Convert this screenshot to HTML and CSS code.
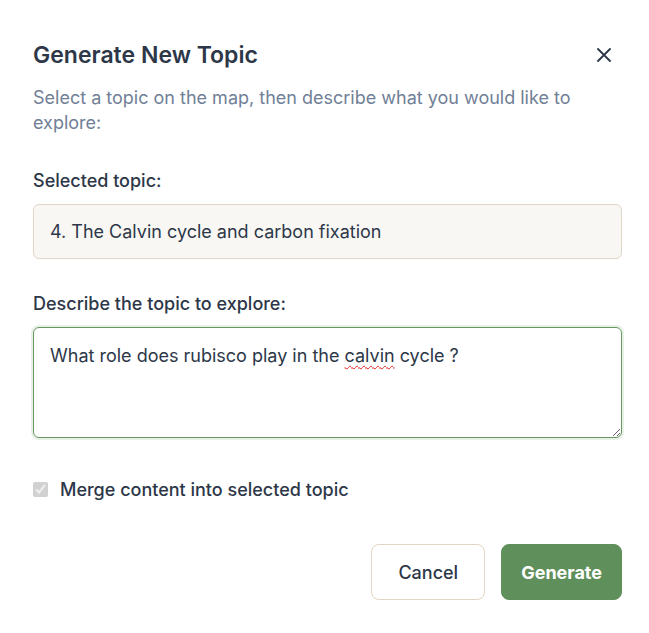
FILE: index.html
```html
<!DOCTYPE html>
<html lang="en">
<head>
<meta charset="utf-8">
<title>Generate New Topic</title>
<link rel="stylesheet" href="styles.css">
</head>
<body>
<div class="dialog">
  <div class="header">
    <h1 class="title">Generate New Topic</h1>
    <button class="close" aria-label="Close">
      <svg width="14" height="14" viewBox="0 0 14 14"><path d="M1 1L13 13M13 1L1 13" stroke="#2d3748" stroke-width="1.8" stroke-linecap="round" fill="none"/></svg>
    </button>
  </div>
  <p class="subtitle">Select a topic on the map, then describe what you would like to explore:</p>

  <div class="field">
    <label class="label">Selected topic:</label>
    <div class="input">4. The Calvin cycle and carbon fixation</div>
  </div>

  <div class="field">
    <label class="label">Describe the topic to explore:</label>
    <div class="textarea">What role does rubisco play in the <span class="misspelled">calvin</span> cycle ?</div>
  </div>

  <label class="check-row">
    <input type="checkbox" class="check" checked disabled>
    <span>Merge content into selected topic</span>
  </label>

  <div class="actions">
    <button class="btn btn-cancel">Cancel</button>
    <button class="btn btn-primary">Generate</button>
  </div>
</div>
</body>
</html>
```
FILE: styles.css
```css
* { box-sizing: border-box; }
html, body { margin: 0; background: #ffffff; }
body {
  font-family: Inter, "Noto Sans", sans-serif;
  color: #2d3748;
}
.dialog {
  padding: 41px 27px 0 33px;
}
.header {
  display: flex;
  justify-content: space-between;
  align-items: center;
}
.title {
  margin: 0;
  font-size: 23px;
  line-height: 28px;
  font-weight: 600;
  color: #2d3748;
}
.close {
  border: 0;
  background: none;
  padding: 0;
  margin-right: 11px;
  width: 14px;
  height: 14px;
  display: flex;
}
.subtitle {
  margin: 16px 0 0;
  font-size: 18px;
  line-height: 25px;
  color: #718096;
}
.field {
  margin-top: 33px;
  display: flex;
  flex-direction: column;
}
.field + .field { margin-top: 32px; }
.label {
  font-size: 18px;
  line-height: 25px;
  font-weight: 500;
  color: #2d3748;
  margin-bottom: 11px;
}
.input {
  height: 55px;
  padding: 15px 16px;
  font-size: 18px;
  line-height: 24px;
  background: #f8f7f4;
  border: 1px solid #e1d6c7;
  border-radius: 6px;
  color: #2d3748;
}
.textarea {
  height: 111px;
  padding: 15px 16px;
  font-size: 18px;
  line-height: 25px;
  border: 1px solid #66985f;
  border-radius: 6px;
  box-shadow: 0 0 0 2px rgba(102, 152, 95, 0.14);
  color: #2d3748;
  overflow: auto;
  resize: vertical;
}
.misspelled {
  text-decoration: underline wavy #e02020;
  text-decoration-thickness: 1px;
  text-underline-offset: 3px;
}
.check-row {
  margin-top: 39px;
  display: flex;
  align-items: center;
  gap: 12px;
  font-size: 18px;
  line-height: 25px;
  font-weight: 500;
  color: #2d3748;
}
.check {
  margin: 0;
  width: 15px;
  height: 15px;
}
.actions {
  margin-top: 42px;
  display: flex;
  justify-content: flex-end;
  gap: 16px;
}
.btn {
  height: 56px;
  font-family: inherit;
  font-size: 18px;
  border-radius: 8px;
  cursor: pointer;
}
.btn-cancel {
  background: #ffffff;
  border: 1px solid #e3d5c3;
  color: #2d3748;
  font-weight: 500;
  padding: 0 26px;
}
.btn-primary {
  background: #5f8f5a;
  border: 1px solid #5f8f5a;
  color: #ffffff;
  font-weight: 700;
  padding: 0 19px;
}
```
